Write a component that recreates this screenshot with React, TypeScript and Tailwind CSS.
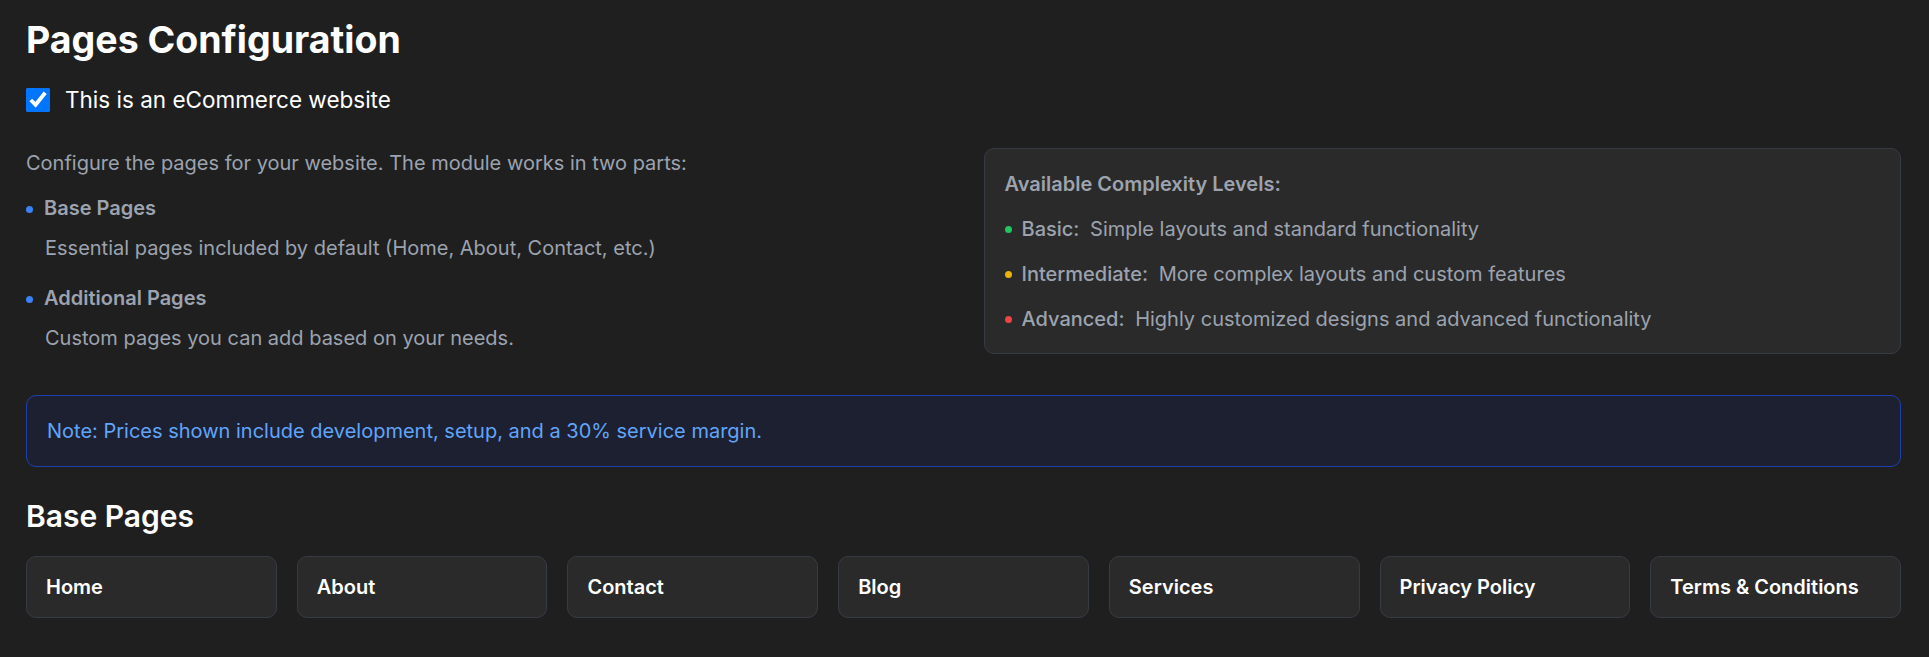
const basePages = [
  'Home',
  'About',
  'Contact',
  'Blog',
  'Services',
  'Privacy Policy',
  'Terms & Conditions',
];

const levels = [
  { name: 'Basic:', text: 'Simple layouts and standard functionality', dot: 'bg-[#22c55e]' },
  { name: 'Intermediate:', text: 'More complex layouts and custom features', dot: 'bg-[#eab308]' },
  { name: 'Advanced:', text: 'Highly customized designs and advanced functionality', dot: 'bg-[#ef4444]' },
];

const parts = [
  { title: 'Base Pages', text: 'Essential pages included by default (Home, About, Contact, etc.)' },
  { title: 'Additional Pages', text: 'Custom pages you can add based on your needs.' },
];

export default function App() {
  return (
    <div className="min-h-screen bg-[#1f1f1f] pl-[26px] pr-[28px] pt-[17px] pb-8 font-['Inter',sans-serif]">
      {/* Header */}
      <h1 className="text-[37.5px] leading-[45px] font-bold text-white">Pages Configuration</h1>

      <label className="mt-[24px] flex items-center gap-[15px] h-[28px]">
        <input type="checkbox" defaultChecked className="w-6 h-6 accent-[#0075ff]" />
        <span className="text-[22.5px] leading-[28px] text-white">This is an eCommerce website</span>
      </label>

      {/* Intro + levels */}
      <div className="mt-[34px] grid grid-cols-2 gap-[40px]">
        <div className="text-[20px] leading-[30px] text-[#9ca3af]">
          <p className="mb-[15px]">Configure the pages for your website. The module works in two parts:</p>
          <div className="flex flex-col gap-[20px]">
            {parts.map((p) => (
              <div key={p.title}>
                <div className="flex items-center gap-[11px]">
                  <span className="w-[7px] h-[7px] rounded-full bg-[#3b82f6] mt-[3px]" />
                  <span className="font-semibold">{p.title}</span>
                </div>
                <p className="mt-[10px] pl-[19px]">{p.text}</p>
              </div>
            ))}
          </div>
        </div>

        <div className="self-start rounded-[10px] border border-[#363b45] bg-[#2a2a2a] px-[20px] pt-[20px] pb-[19px] text-[20px] leading-[30px] text-[#9ca3af]">
          <h3 className="font-semibold">Available Complexity Levels:</h3>
          <div className="mt-[15px] flex flex-col gap-[15px]">
            {levels.map((l) => (
              <div key={l.name} className="flex items-center gap-[10px]">
                <span className={`w-[7px] h-[7px] rounded-full ${l.dot}`} />
                <span>
                  <span className="font-medium">{l.name}</span> <span className="ml-[5px]">{l.text}</span>
                </span>
              </div>
            ))}
          </div>
        </div>
      </div>

      {/* Note */}
      <div className="mt-[41px] rounded-[10px] border border-[#1e40af] bg-[#1d2030] pl-[20px] pr-5 py-[20px] text-[20px] leading-[30px] text-[#60a5fa]">
        Note: Prices shown include development, setup, and a 30% service margin.
      </div>

      {/* Base pages */}
      <h2 className="mt-[31px] text-[30px] leading-[36px] font-semibold text-white">Base Pages</h2>
      <div className="mt-[22px] grid grid-cols-7 gap-[20px]">
        {basePages.map((name) => (
          <div
            key={name}
            className="rounded-[10px] border border-[#363b45] bg-[#2a2a2a] pl-[19px] pr-4 pt-[15px] pb-[15px] text-[20px] leading-[30px] font-semibold text-white"
          >
            {name}
          </div>
        ))}
      </div>
    </div>
  );
}
